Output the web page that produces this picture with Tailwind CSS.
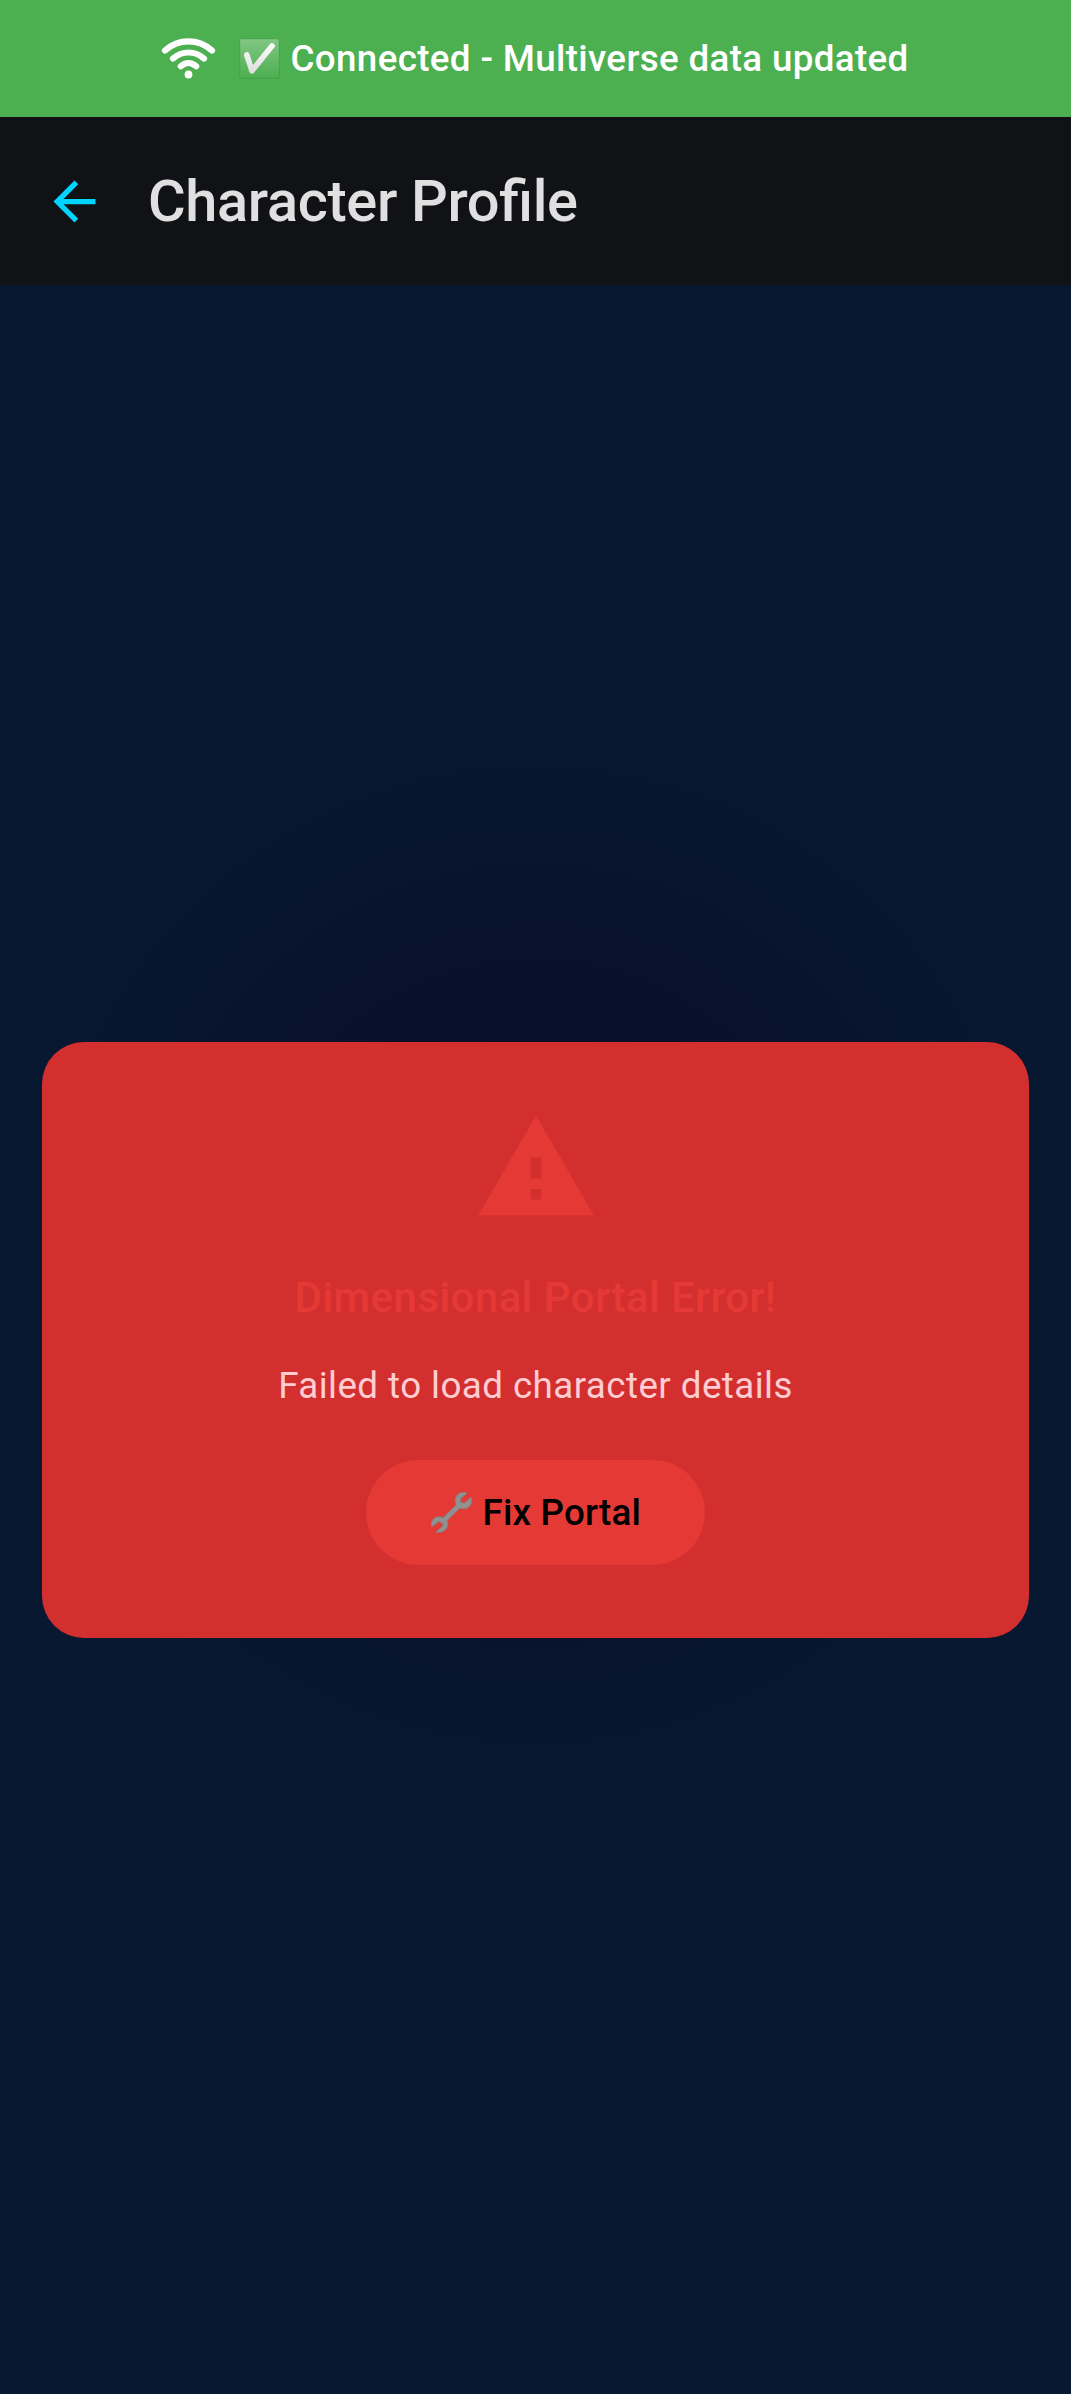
<!DOCTYPE html>
<html lang="en">
<head>
<meta charset="utf-8">
<title>Character Profile</title>
<script src="https://cdn.jsdelivr.net/npm/@tailwindcss/browser@4"></script>
</head>
<body class="flex h-[2394px] w-[1071px] flex-col overflow-hidden font-['Roboto',sans-serif]">
  <div class="flex h-[117px] shrink-0 items-center bg-[#4caf50] pl-[157px] text-white">
    <svg class="h-[63px] w-[63px] shrink-0" viewBox="0 0 63 63" fill="none" stroke="currentColor" stroke-width="6.2" stroke-linecap="round">
      <path d="M8 23.500C21.500 11.300 41.500 11.300 55 23.500"/>
      <path d="M16 31.500C25 23.500 38 23.500 47 31.500"/>
      <path d="M23.800 39.200C28.500 35 34.500 35 39.200 39.200"/>
      <circle cx="31.500" cy="47.500" r="3.900" fill="currentColor" stroke="none"/>
    </svg>
    <svg class="ml-[18.500px] h-[41px] w-[41px] shrink-0" viewBox="0 0 41 41">
      <defs>
        <linearGradient id="tile" x1="0" y1="0" x2="0" y2="1"><stop offset="0" stop-color="#81c784"/><stop offset="1" stop-color="#4caf50"/></linearGradient>
        <linearGradient id="tick" x1="0" y1="0" x2="0" y2="1"><stop offset="0" stop-color="#fafafa"/><stop offset="1" stop-color="#e0e0e0"/></linearGradient>
      </defs>
      <rect x="0.700" y="0.700" width="39.600" height="39.600" rx="1.200" fill="url(#tile)" stroke="#439a46" stroke-opacity="0.700"/>
      <path d="M7.800 17L13 32.800L33 8" fill="none" stroke="url(#tick)" stroke-width="5.600" stroke-linecap="round" stroke-linejoin="round"/>
    </svg>
    <span class="ml-[11px] whitespace-nowrap text-[36.75px] font-medium tracking-[0.35px]">Connected - Multiverse data updated</span>
  </div>
  <header class="flex h-[168px] shrink-0 items-center bg-[#111216] pl-[43px]">
    <svg class="h-[63px] w-[63px] shrink-0 text-[#00d4ff]" viewBox="0 0 24 24" fill="currentColor"><path d="M20 11H7.830l5.590-5.590L12 4l-8 8 8 8 1.410-1.410L7.830 13H20v-2z"/></svg>
    <h1 class="ml-[42px] whitespace-nowrap text-[57.75px] leading-[73px] font-medium tracking-[-0.35px] text-[#e0e0e0] [font-feature-settings:'liga']">Character Profile</h1>
  </header>
  <main class="flex flex-1 items-start justify-center bg-[radial-gradient(circle_540px_at_50%_970px,#0a0a24,#071830)] pt-[757px]">
    <section class="flex h-[596px] w-[987px] flex-col items-center rounded-[42px] bg-[#d32f2f] pt-[63px]">
      <svg class="h-[126px] w-[126px] shrink-0 text-[#e53935]" viewBox="0 0 24 24" fill="currentColor"><path d="M1 21h22L12 2 1 21zm12-3h-2v-2h2v2zm0-4h-2v-4h2v4z"/></svg>
      <h2 class="mt-[35px] whitespace-nowrap text-[42px] leading-[63px] font-medium tracking-[0.45px] text-[#e53935]">Dimensional Portal Error!</h2>
      <p class="mt-[31px] whitespace-nowrap text-[36.75px] leading-[52px] tracking-[0.43px] text-[#ffcdd2]">Failed to load character details</p>
      <button class="mt-[48px] flex h-[105px] w-[339px] shrink-0 items-center rounded-full bg-[#e53935] pl-[65px] text-black">
        <svg class="h-[41px] w-[41px] shrink-0" viewBox="0 0 41 41">
          <path d="M36 1C31 -1 25 2 24.300 7C24 9.500 24.500 11.500 25 13L12 25.700C8 23.500 3 25 1 29C0 31 0 33.500 0.500 35L8 29.500L12 31.500L11.500 34L5 40C9.500 41.500 15 39 16.500 34.500C17.200 32 17 30 16 28.500L29 16C33 18 38 16.500 40 12C41 9.500 40.800 7 40 5L33.500 11L30 10.500L29.500 7Z" fill="#919191" stroke="#808080" stroke-width="0.800" stroke-linejoin="round"/>
        </svg>
        <span class="ml-[10.500px] whitespace-nowrap text-[36.75px] font-medium tracking-[0.2px]">Fix Portal</span>
      </button>
    </section>
  </main>
</body>
</html>
